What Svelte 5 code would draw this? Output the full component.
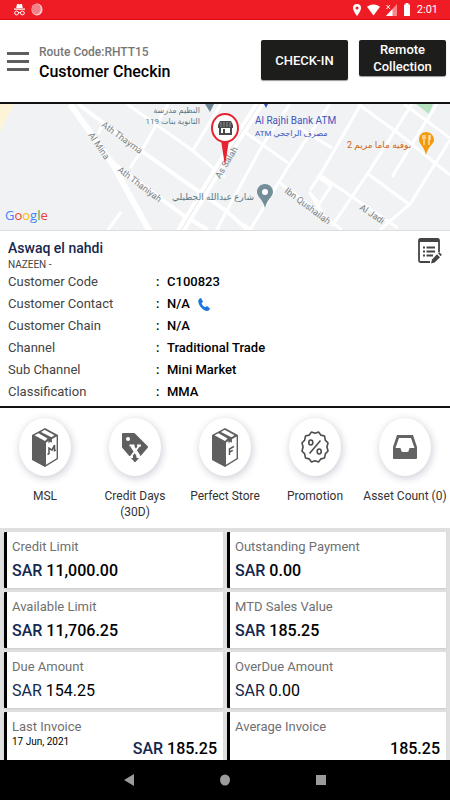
<script>
  const details = [
    { label: 'Customer Code', value: 'C100823' },
    { label: 'Customer Contact', value: 'N/A', phone: true },
    { label: 'Customer Chain', value: 'N/A' },
    { label: 'Channel', value: 'Traditional Trade' },
    { label: 'Sub Channel', value: 'Mini Market' },
    { label: 'Classification', value: 'MMA' }
  ];

  const shortcuts = [
    { icon: 'box', letter: 'M', label: 'MSL' },
    { icon: 'tag', label: 'Credit Days (30D)' },
    { icon: 'box', letter: 'F', label: 'Perfect Store' },
    { icon: 'promo', label: 'Promotion' },
    { icon: 'tray', label: 'Asset Count (0)' }
  ];

  const cards = [
    { label: 'Credit Limit', currency: 'SAR', amount: '11,000.00', strong: true },
    { label: 'Outstanding Payment', currency: 'SAR', amount: '0.00', strong: true },
    { label: 'Available Limit', currency: 'SAR', amount: '11,706.25', strong: true },
    { label: 'MTD Sales Value', currency: 'SAR', amount: '185.25', strong: true },
    { label: 'Due Amount', currency: 'SAR', amount: '154.25' },
    { label: 'OverDue Amount', currency: 'SAR', amount: '0.00' }
  ];

  // Twelve-pointed badge outline around the percent sign
  const badge = Array.from({ length: 24 }, (_, i) => {
    const a = (i * Math.PI) / 12 - Math.PI / 2;
    const r = i % 2 ? 15.5 : 13.7;
    return `${(16 + r * 0.87 * Math.cos(a)).toFixed(2)},${(17 + r * Math.sin(a)).toFixed(2)}`;
  }).join(' ');
</script>

<div class="screen">
  <div class="status">
    <svg width="11" height="13" viewBox="0 0 11 13" fill="none" stroke="#fff">
      <path d="M3 1h1.500l1 .5 1-.5H8l.8 4H2.200zM0 5.500h11v1.300H0z" fill="#fff" stroke="none" />
      <circle cx="2.600" cy="10" r="1.900" /><circle cx="8.400" cy="10" r="1.900" /><path d="M4.500 9.600h2" />
    </svg>
    <svg width="12" height="13" viewBox="0 0 12 13">
      <ellipse cx="6" cy="6.500" rx="5.500" ry="6" fill="#fbd0d3" /><ellipse cx="5.300" cy="6" rx="4.500" ry="5.200" fill="#f47f86" />
    </svg>
    <span class="grow"></span>
    <svg width="8" height="12" viewBox="0 0 8 12"><path d="M4 0a4 4 0 0 0-4 4c0 3 4 8 4 8s4-5 4-8a4 4 0 0 0-4-4zm0 2.500a1.500 1.500 0 1 1 0 3 1.500 1.500 0 0 1 0-3z" fill="#fff" fill-rule="evenodd" /></svg>
    <svg width="13" height="12" viewBox="0 0 14 12"><path d="M0 2.500Q7-2.500 14 2.500L7 12z" fill="#fff" /></svg>
    <svg width="11" height="12" viewBox="0 0 11 12">
      <path d="M0 12 11 0v12z" fill="#f8868c" /><path d="M0 12 6.500 5v7z" fill="#fff" /><path d="m.5 1 3.500 4M4 1 .5 5" stroke="#fff" fill="none" />
    </svg>
    <svg width="8" height="13" viewBox="0 0 8 13"><path d="M2.500 0h3v1.500H7V13H1V1.500h1.500z" fill="#fff" /></svg>
    <span class="clock">2:01</span>
  </div>

  <header>
    <button class="menu" aria-label="Menu"><i></i><i></i><i></i></button>
    <div class="titles">
      <p>Route Code:RHTT15</p>
      <h1>Customer Checkin</h1>
    </div>
    <button class="action tall">CHECK-IN</button>
    <button class="action">Remote Collection</button>
  </header>

  <main>
    <div class="map">
      <svg viewBox="0 0 450 126" preserveAspectRatio="xMidYMid slice" role="img" aria-label="Customer location map">
        <rect width="450" height="126" fill="#f0f2f4" />
        <path d="M0 0h14L0 28z" fill="#fdf4d8" />
        <path d="M416 0h17l-4 10z" fill="#b5e3c0" />
        <g fill="none" stroke="#fff" stroke-width="3">
          <path d="M78 0 140 46 225 106 248 126" stroke-width="4" />
          <path d="M113 59 183 111 208 126" stroke-width="4" />
          <path d="M98 30 104 18M130 64 142 46 168 0M127 0 192 46 212 63M193 46 221 0M108 126 121 108M217 126 225 110 262 42 290 0M190 111 208 82M212 63 225 73" />
          <path d="M250 126 288 63 330 0M310 86 320 71 361 0M332 122 368 69 412 0M380 126 410 100 450 36M392 73 425 19 437 0M250 126 244 120" />
          <path d="M245 28 288 59M280 79 342 126M320 71 398 124M367 69 410 101M358 0 398 29 450 71M298 23 332 44M404 0 450 34M309 88 318 98M309 88 322 108M317 72 331 82 316 105" />
        </g>
        <path d="M70 0 112 59 150 128" stroke="#fff" stroke-width="6" fill="none" />
        <path d="M180 128 223 57 262-4" stroke="#fff" stroke-width="9" fill="none" />
        <path d="M180 128 223 57 262-4" stroke="#e4e7ea" fill="none" />
        <g class="street">
          <text transform="translate(101 22) rotate(36)">Ath Thayma</text>
          <text transform="translate(88 31) rotate(56)">Al Mina</text>
          <text transform="translate(117 67) rotate(37)">Ath Thaniyah</text>
          <text transform="translate(220 75) rotate(-59)">As Salah</text>
          <text transform="translate(284 88) rotate(37)">Ibn Qushailah</text>
          <text transform="translate(359 105) rotate(34)">Al Jadi</text>
        </g>
        <g class="place">
          <text x="200" y="9" text-anchor="end" font-size="8" direction="ltr">النظيم مدرسة</text>
          <text x="200" y="20" text-anchor="end" font-size="8" direction="ltr">119 الثانوية بنات</text>
          <text x="254" y="96" text-anchor="end" font-size="9" direction="ltr">شارع عبدالله الجطيلي</text>
        </g>
        <path d="M205 0h9l-4 8z" fill="#6e8794" />
        <path d="M264 0h4l-2 4z" fill="#3b50c0" />
        <g fill="#4256bd">
          <text x="255" y="20" font-size="10">Al Rajhi Bank ATM</text>
          <text x="255" y="32" font-size="8">ATM مصرف الراجحي</text>
        </g>
        <text x="347" y="44" font-size="9" fill="#cf681c">2 بوفيه ماما مريم</text>
        <path d="M426 28c-4 0-7 3-7 8 0 4 5 6 7 15 2-9 8-11 8-15 0-5-4-8-8-8z" fill="#f59a0b" />
        <path d="M423 31v4M425 31v4M424 35v6M429 31v10M430 31v5" stroke="#fff" fill="none" />
        <path d="M265 80c-5 0-8 4-8 8 0 5 6 7 8 16 2-9 8-11 8-16 0-4-3-8-8-8z" fill="#758d99" />
        <circle cx="265" cy="88" r="3" fill="#fff" />
        <path d="M221 36h8l-4 26z" fill="#e7232f" />
        <ellipse cx="225" cy="24" rx="13" ry="14" fill="#fff" stroke="#e7232f" stroke-width="2" />
        <path d="M220 17h11l2 4v3h-15v-3zM219 24h2v6h-2zM230 24h2v6h-2zM219 29h13v2h-13zM223 25h2v4h-2z" fill="#4a4a4a" />
        <path d="M221 18v5M224 18v5M227 18v5M230 18v5" stroke="#bbb" stroke-width=".6" />
        <text x="5" y="116" class="google"><tspan fill="#4285f4">G</tspan><tspan fill="#ea4335">o</tspan><tspan fill="#fbbc05">o</tspan><tspan fill="#4285f4">g</tspan><tspan fill="#34a853">l</tspan><tspan fill="#ea4335">e</tspan></text>
      </svg>
    </div>

    <section class="customer">
      <div class="info">
        <h2>Aswaq el nahdi</h2>
        <p>NAZEEN -</p>
        <dl>
          {#each details as row}
            <div>
              <dt>{row.label}</dt>
              <dd>
                {row.value}
                {#if row.phone}
                  <button class="plain" aria-label="Call customer">
                    <svg width="12" height="13" viewBox="0 0 12 13"><path d="M3 0C1 .5 0 2 .3 4 1 8 5 12.500 9 13c1.500 0 2.700-1 3-2.500L9 8 7.300 9.300C5.500 8.500 4.200 7 3.500 5.200L5 3.800z" fill="#1976e0" /></svg>
                  </button>
                {/if}
              </dd>
            </div>
          {/each}
        </dl>
      </div>
      <button class="plain" aria-label="Edit customer">
        <svg width="24" height="26" viewBox="0 0 24 26" fill="none" stroke="#444">
          <path d="M21 14V2.500Q21 1 19.500 1h-17Q1 1 1 2.500v20Q1 24 2.500 24H12" stroke-width="1.800" />
          <path d="M1 2.500h20" stroke-width="3" />
          <path d="M5 9.500h2M5 13.500h2M5 17.500h2M8.500 9.500H17M8.500 13.500H17M8.500 17.500H15" stroke-width="1.800" />
          <path d="m13 25.500 1-4 5-5.300 3 3-5.300 5.300zM20 15.300l1.200-1.200 2.600 2.600-1.100 1.500z" fill="#444" stroke="none" />
        </svg>
      </button>
    </section>

    <section class="shortcuts">
      {#each shortcuts as item}
        <button class="shortcut">
          <span class="disc">
            {#if item.icon === 'box'}
              <svg width="26" height="39" viewBox="0 0 26 39">
                <path d="M13 0 26 7v24L13 39 0 32V7z" fill="#5f5f5f" />
                <path d="M14 14.500 24.600 8.500v21.700L14 36.800z" fill="#fff" />
                <path d="M2.500 7.300 6.500 5.200 15.500 10.500 13 13zM9 4 12.500 1.800 22.500 7.300 19.500 9.300z" fill="#fff" />
                <path d="M16.500 11.500v4l1.700-1.800 1.700 1V9.300z" fill="#5f5f5f" />
                {#if item.letter === 'M'}
                  <path d="M15.500 26.500l1.500-.9v-5.500l3 2 2.500-5v5.600l1.300-.8" fill="none" stroke="#555" stroke-width="1.500" />
                {:else}
                  <path d="M17.500 27v-6l4.500-2.600M17.500 24.200l3.300-1.900" fill="none" stroke="#555" stroke-width="1.500" />
                {/if}
              </svg>
            {:else if item.icon === 'tag'}
              <svg width="28" height="32" viewBox="0 0 28 32">
                <path d="M2 3h11l13 13-12 14L2 16z" fill="#5f5f5f" stroke="#5f5f5f" stroke-width="2" stroke-linejoin="round" />
                <circle cx="7" cy="8" r="2" fill="#fff" />
                <path d="M8.500 14.500h5M16 14.500h4M7.500 26h4.500M15.500 26h5" stroke="#fff" stroke-width="1.800" />
                <path d="M11 15 18 25.500" stroke="#fff" stroke-width="3.500" /><path d="M18 15 10 25.500" stroke="#fff" stroke-width="2" />
              </svg>
            {:else if item.icon === 'promo'}
              <svg width="32" height="34" viewBox="0 0 32 34" fill="none" stroke="#4d4d4d" stroke-width="1.600">
                <polygon points={badge} stroke-linejoin="round" />
                <path d="M21.500 10.500 10.500 23.500" /><ellipse cx="11.800" cy="12.500" rx="2" ry="2.500" /><ellipse cx="20.200" cy="21.500" rx="2" ry="2.500" />
              </svg>
            {:else}
              <svg width="26" height="24" viewBox="0 0 26 24">
                <path d="M5 0h16l4 12v11q0 1-1 1H2q-1 0-1-1V12zm2 3L3.500 13H8q1 0 1 1.500Q9 17 11 17h4q2 0 2-2.500Q17 13 18 13h4.500L19 3z" fill="#636363" fill-rule="evenodd" />
              </svg>
            {/if}
          </span>
          <span class="caption">{item.label}</span>
        </button>
      {/each}
    </section>

    <section class="cards">
      {#each cards as card}
        <article>
          <h3>{card.label}</h3>
          <p class="money" class:strong={card.strong}><span>{card.currency}</span> {card.amount}</p>
        </article>
      {/each}
      <article class="invoice">
        <div>
          <h3>Last Invoice</h3>
          <time datetime="2021-06-17">17 Jun, 2021</time>
        </div>
        <p class="money strong"><span>SAR</span> 185.25</p>
      </article>
      <article class="invoice">
        <h3>Average Invoice</h3>
        <p class="money strong">185.25</p>
      </article>
    </section>
  </main>

  <nav>
    <button class="plain" aria-label="Back"><svg width="10" height="12" viewBox="0 0 10 12"><path d="M10 0v12L0 6z" fill="#9b9b9b" /></svg></button>
    <button class="plain" aria-label="Home"><svg width="10" height="12" viewBox="0 0 10 12"><ellipse cx="5" cy="6" rx="5" ry="5.500" fill="#9b9b9b" /></svg></button>
    <button class="plain" aria-label="Recent apps"><svg width="10" height="10" viewBox="0 0 10 10"><path d="M0 0h10v10H0z" fill="#9b9b9b" /></svg></button>
  </nav>
</div>

<style>
  .screen {
    height: 100vh;
    display: flex;
    flex-direction: column;
    font-family: Roboto, "Noto Sans", "DejaVu Sans", sans-serif;
    color: #111;
    background: #fff;
  }
  .screen * { box-sizing: border-box; }
  h1, h2, h3, p, dl, dt, dd { margin: 0; font-weight: 400; }
  button { font: inherit; color: inherit; border: 0; padding: 0; background: none; }
  svg { display: block; }
  .plain { display: flex; }

  .status {
    flex: none;
    height: 20px;
    padding: 0 12px 0 14px;
    display: flex;
    align-items: center;
    gap: 6px;
    background: #ef1c25;
    border-bottom: 1px solid #dd0c14;
    color: #fff;
  }
  .grow { flex: 1; }
  .clock { font-size: 11px; }

  header {
    flex: none;
    height: 84px;
    padding: 20px 4px 0 7px;
    display: flex;
    align-items: flex-start;
    border-bottom: 2px solid #111;
  }
  .menu {
    width: 22px;
    margin: 12px 10px 0 0;
    display: flex;
    flex-direction: column;
    gap: 5px;
  }
  .menu i { width: 22px; height: 3px; background: #5e5e5e; }
  .titles { flex: 1; padding-top: 3px; white-space: nowrap; }
  .titles p { font-size: 12px; line-height: 18px; font-weight: 500; color: #777; }
  .titles h1 { font-size: 16px; line-height: 22px; font-weight: 500; color: #000; }
  .action {
    width: 87px;
    height: 36px;
    margin-left: 11px;
    border-radius: 2px;
    background: #1d1d1b;
    box-shadow: 0 1px 1px #999;
    color: #fff;
    font-size: 13px;
    line-height: 17px;
    font-weight: 500;
  }
  .tall { height: 40px; }

  .map { height: 126px; }
  .map svg { width: 100%; height: 100%; }
  .street { font-size: 9px; fill: #7c7f82; }
  .place { fill: #5b7886; }
  .google { font-family: "Open Sans", sans-serif; font-size: 13px; }

  main { flex: 1; min-height: 0; overflow: hidden; }

  .customer {
    padding: 7px 8px 3px;
    display: flex;
    align-items: flex-start;
    justify-content: space-between;
    border-top: 1px solid #ddd;
    border-bottom: 2px solid #111;
  }
  h2 { font-size: 14px; line-height: 20px; font-weight: 500; color: #14284f; }
  .info p { font-size: 10px; line-height: 13px; color: #444; }
  dl div { display: flex; font-size: 13px; line-height: 22px; }
  dt { width: 148px; color: #444; }
  dd { display: flex; align-items: center; gap: 8px; font-weight: 500; color: #000; }
  dd::before { content: ":"; width: 3px; }

  .shortcuts {
    height: 120px;
    padding-top: 10px;
    display: grid;
    grid-template-columns: repeat(5, 1fr);
    align-items: start;
  }
  .shortcut { display: flex; flex-direction: column; align-items: center; gap: 12px; }
  .disc {
    width: 52px;
    height: 58px;
    border-radius: 50%;
    display: grid;
    place-items: center;
    background: #fff;
    box-shadow: 1px 2px 9px #c9c9d4;
  }
  .caption { max-width: 84px; font-size: 12px; line-height: 16px; color: #333; }

  .cards {
    padding: 4px;
    display: grid;
    grid-template-columns: 1fr 1fr;
    gap: 4px;
    background: #e0e0e0;
  }
  article {
    height: 56px;
    padding: 6px 6px 0 5px;
    border-left: 3px solid #000;
    border-radius: 1px;
    background: #fff;
    box-shadow: 0 1px 2px #ccc;
  }
  h3 { font-size: 13px; line-height: 18px; color: #707070; }
  .money { padding-top: 3px; font-size: 16px; line-height: 24px; color: #000; }
  .money span { color: #14284f; }
  .strong { font-weight: 500; }
  .invoice { height: 64px; display: flex; justify-content: space-between; }
  .invoice time { display: block; font-size: 10px; line-height: 12px; color: #000; }
  .invoice .money { padding-top: 22px; line-height: 18px; }

  nav {
    flex: none;
    height: 40px;
    display: flex;
    align-items: center;
    justify-content: center;
    gap: 86px;
    background: #000;
  }
</style>
